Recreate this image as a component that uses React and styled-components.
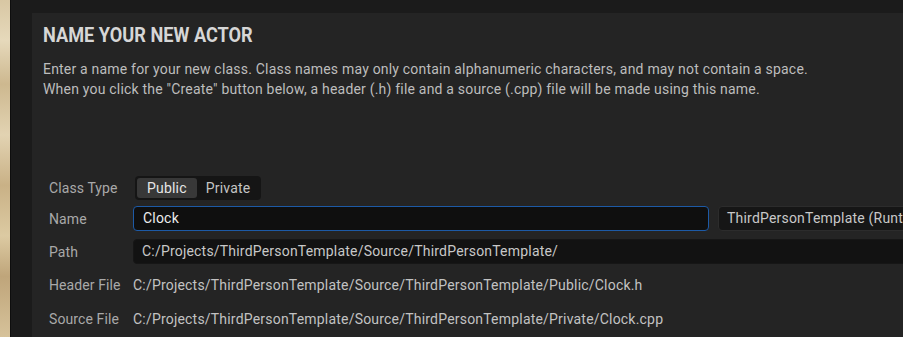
import React from "react";
import styled, { createGlobalStyle } from "styled-components";

const Global = createGlobalStyle`
  html, body { margin: 0; padding: 0; background: #1a1a1a; overflow: hidden; }
  body { font-family: Roboto, "Noto Sans", sans-serif; }
`;

const Screen = styled.div`
  display: flex;
  width: 903px;
  height: 337px;
  overflow: hidden;
`;

const Backdrop = styled.div`
  width: 10px;
  flex: none;
  background: linear-gradient(180deg, #d8c7a3 0%, #e6d9bb 12%, #cdb88f 25%, #e2d3b2 40%, #c9b186 55%, #dccaa2 70%, #bfa57a 82%, #d6c29a 100%);
`;

const Edge = styled.div`
  width: 1px;
  flex: none;
  background: #0e0e0e;
`;

const Frame = styled.div`
  flex: 1;
  background: #1b1b1b;
  padding: 13px 0 0 21px;
  min-width: 0;
`;

const Panel = styled.div`
  background: #242424;
  height: 100%;
  padding: 8px 0 0 11px;
  box-sizing: border-box;
  overflow: hidden;
`;

const Title = styled.h1`
  margin: 0;
  font-family: Roboto, sans-serif;
  font-weight: 700;
  font-size: 21px;
  line-height: 28px;
  color: #d6d6d6;
  transform: scaleX(0.865);
  transform-origin: left center;
  white-space: nowrap;
`;

const Description = styled.p`
  margin: 10px 0 0;
  font-size: 14px;
  letter-spacing: 0.2px;
  line-height: 20px;
  color: #bdbdbd;
  white-space: nowrap;
`;

const Form = styled.div`
  margin-top: 74px;
  padding-left: 6px;
  display: flex;
  flex-direction: column;
`;

const Row = styled.div`
  display: flex;
  align-items: center;
  height: ${p => p.$h || 33}px;
`;

const Label = styled.div`
  width: 84px;
  flex: none;
  font-size: 14px;
  letter-spacing: 0.1px;
  color: #a9a9a9;
  white-space: nowrap;
`;

const Segmented = styled.div`
  display: flex;
  margin-left: 2px;
  padding: 2px;
  background: #151515;
  border-radius: 4px;
`;

const Segment = styled.div`
  height: 20px;
  line-height: 20px;
  padding: 0 ${p => (p.$active ? "10px" : "9px")};
  border-radius: 3px;
  font-size: 14px;
  letter-spacing: 0.2px;
  color: ${p => (p.$active ? "#e6e6e6" : "#c4c4c4")};
  background: ${p => (p.$active ? "#383838" : "transparent")};
`;

const Input = styled.div`
  box-sizing: border-box;
  height: 25px;
  line-height: 23px;
  padding: 0 ${p => (p.$focused ? 9 : 8)}px;
  font-size: 14px;
  letter-spacing: 0.2px;
  white-space: nowrap;
  flex: none;
  width: ${p => p.$w}px;
  margin-right: ${p => p.$gap || 0}px;
  border-radius: 4px;
  border: 1px solid ${p => p.$border};
  background: ${p => p.$bg};
  color: ${p => (p.$focused ? "#ececec" : "#c8c8c8")};
`;

const Value = styled.div`
  font-size: 14px;
  letter-spacing: 0.2px;
  color: #c2c2c2;
  white-space: nowrap;
`;

export default function App() {
  return (
    <>
      <Global />
      <Screen>
        <Backdrop />
        <Edge />
        <Frame>
          <Panel>
            <Title>NAME YOUR NEW ACTOR</Title>
            <Description>
              Enter a name for your new class. Class names may only contain alphanumeric characters, and may not contain a space.
              <br />
              When you click the "Create" button below, a header (.h) file and a source (.cpp) file will be made using this name.
            </Description>
            <Form>
              <Row $h={29}>
                <Label>Class Type</Label>
                <Segmented>
                  <Segment $active>Public</Segment>
                  <Segment>Private</Segment>
                </Segmented>
              </Row>
              <Row $h={33}>
                <Label>Name</Label>
                <Input $focused $w={576} $gap={9} $border="#1d5aa6" $bg="#0f0f0f">Clock</Input>
                <Input $w={240} $border="#2c2c2c" $bg="#161616">ThirdPersonTemplate (Runtime)</Input>
              </Row>
              <Row $h={33}>
                <Label>Path</Label>
                <Input $w={800} $border="#161616" $bg="#121212">C:/Projects/ThirdPersonTemplate/Source/ThirdPersonTemplate/</Input>
              </Row>
              <Row $h={34}>
                <Label>Header File</Label>
                <Value>C:/Projects/ThirdPersonTemplate/Source/ThirdPersonTemplate/Public/Clock.h</Value>
              </Row>
              <Row $h={34}>
                <Label>Source File</Label>
                <Value>C:/Projects/ThirdPersonTemplate/Source/ThirdPersonTemplate/Private/Clock.cpp</Value>
              </Row>
            </Form>
          </Panel>
        </Frame>
      </Screen>
    </>
  );
}
